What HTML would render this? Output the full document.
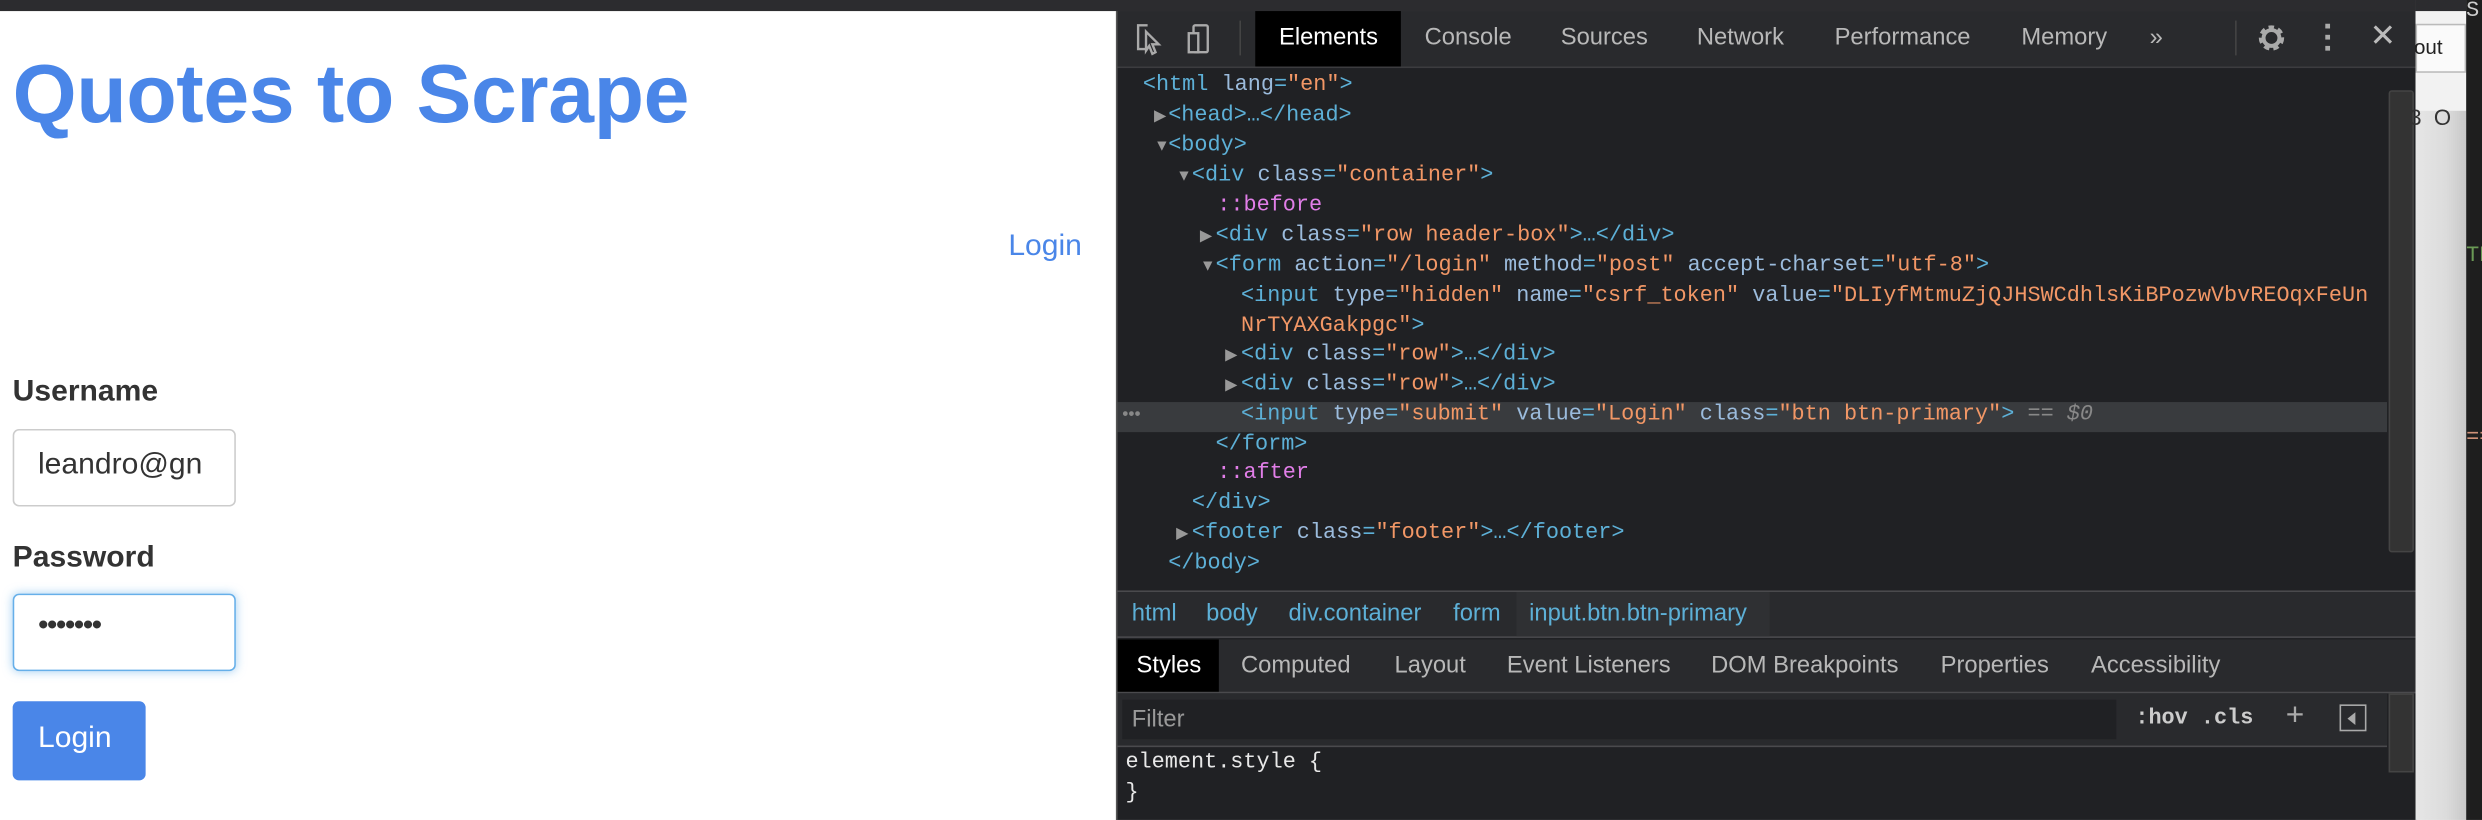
<!DOCTYPE html>
<html><head><meta charset="utf-8"><style>
html,body{margin:0;padding:0;width:2482px;height:820px;overflow:hidden;background:#fff}
#w{position:absolute;left:0;top:0;width:1568px;height:518px;transform:scale(1.58291);transform-origin:0 0;font-family:"Liberation Sans",sans-serif}
.a{position:absolute;white-space:pre}
.m{font-family:"Liberation Mono",monospace;font-size:13.8px;color:#5db0d7}
.l{position:absolute;white-space:pre;font-family:"Liberation Mono",monospace;font-size:13.8px;color:#5db0d7;line-height:18px}
.ar{position:absolute;font-size:10px;color:#999;line-height:17px}
.t{color:#9bbbdc}.v{color:#f29766}.p{color:#e17ee8}.g{color:#888}
.tab{position:absolute;top:7px;height:35px;line-height:33px;font-size:15px;color:#b8b8b8}
.st{position:absolute;top:404px;height:33px;line-height:33px;font-size:15px;color:#b8b8b8}
</style></head><body><div id="w">
<div class="a" style="left:0;top:0;width:1568px;height:7px;background:#2c2c2f"></div>
<div class="a" style="left:8px;top:30px;font-size:52px;font-weight:bold;color:#4a86e8;letter-spacing:-0.2px">Quotes to Scrape</div>
<div class="a" style="left:637px;top:145px;font-size:19px;color:#4a86e8">Login</div>
<div class="a" style="left:8px;top:237px;font-size:19px;font-weight:bold;color:#333">Username</div>
<div class="a" style="left:8px;top:271px;width:141px;height:49px;border:1px solid #ccc;border-radius:4px;box-sizing:border-box"></div>
<div class="a" style="left:24px;top:283px;font-size:19px;color:#333">leandro@gn</div>
<div class="a" style="left:8px;top:342px;font-size:19px;font-weight:bold;color:#333">Password</div>
<div class="a" style="left:8px;top:375px;width:141px;height:49px;border:1px solid #66afe9;border-radius:4px;box-sizing:border-box;box-shadow:0 0 6px rgba(102,175,233,.6)"></div>
<div class="a" style="left:24px;top:385px;font-size:19px;color:#333;letter-spacing:-1px">•••••••</div>
<div class="a" style="left:8px;top:443px;width:84px;height:50px;background:#4a86e8;border-radius:4px"></div>
<div class="a" style="left:24px;top:456px;font-size:19px;color:#fff">Login</div>

<div class="a" style="left:705px;top:7px;width:821px;height:511px;background:#202124;border-left:1px solid #555"></div>
<div class="a" style="left:706px;top:7px;width:820px;height:35px;background:#292a2d;border-bottom:1px solid #3c3c3f"></div>
<svg class="a" style="left:716px;top:13px" width="60" height="24" viewBox="0 0 60 24"><path d="M9 3H3v15h5M8 7l8 8-4 0 2 5-2 1-2-5-2 3z" fill="none" stroke="#aaa" stroke-width="1.5"/><rect x="38" y="3" width="9" height="17" rx="1" fill="none" stroke="#aaa" stroke-width="1.5"/><rect x="35" y="8" width="6" height="12" fill="#292a2d" stroke="#aaa" stroke-width="1.5"/></svg>
<div class="a" style="left:783px;top:13px;width:1px;height:22px;background:#444"></div>
<div class="a" style="left:793px;top:7px;width:92px;height:35px;background:#000"></div>
<div class="tab" style="left:808px;color:#fff">Elements</div>
<div class="tab" style="left:900px">Console</div>
<div class="tab" style="left:986px">Sources</div>
<div class="tab" style="left:1072px">Network</div>
<div class="tab" style="left:1159px">Performance</div>
<div class="tab" style="left:1277px">Memory</div>
<div class="tab" style="left:1358px">»</div>
<div class="a" style="left:1412px;top:13px;width:1px;height:22px;background:#444"></div>
<svg class="a" style="left:1425px;top:14px" width="20" height="20" viewBox="0 0 20 20"><circle cx="10" cy="10" r="6" fill="none" stroke="#aaa" stroke-width="4" stroke-dasharray="3 2.3"/><circle cx="10" cy="10" r="5" fill="none" stroke="#aaa" stroke-width="2.5"/></svg>
<div class="a" style="left:1469px;top:15px;width:3px;height:3px;background:#aaa;box-shadow:0 7px #aaa,0 14px #aaa"></div>
<div class="tab" style="left:1497px;color:#bbb;font-size:20px">✕</div>

<div class="a" style="left:706px;top:254px;width:802px;height:19px;background:#393b3e"></div>
<div class="a g" style="left:709px;top:256px;font-size:11px">•••</div>
<div class="a" style="left:1509px;top:57px;width:16px;height:292px;background:#333;border:1px solid #444;border-radius:2px;box-sizing:border-box"></div>

<div class="l" style="left:722px;top:46px">&lt;html <span class="t">lang</span>=<span class="v">"en"</span>&gt;</div>
<div class="ar" style="left:729px;top:65px">▶</div><div class="l" style="left:738px;top:65px">&lt;head&gt;…&lt;/head&gt;</div>
<div class="ar" style="left:729px;top:84px">▼</div><div class="l" style="left:738px;top:84px">&lt;body&gt;</div>
<div class="ar" style="left:743px;top:103px">▼</div><div class="l" style="left:753px;top:103px">&lt;div <span class="t">class</span>=<span class="v">"container"</span>&gt;</div>
<div class="l p" style="left:769px;top:122px">::before</div>
<div class="ar" style="left:758px;top:141px">▶</div><div class="l" style="left:768px;top:141px">&lt;div <span class="t">class</span>=<span class="v">"row header-box"</span>&gt;…&lt;/div&gt;</div>
<div class="ar" style="left:758px;top:160px">▼</div><div class="l" style="left:768px;top:160px">&lt;form <span class="t">action</span>=<span class="v">"/login"</span> <span class="t">method</span>=<span class="v">"post"</span> <span class="t">accept-charset</span>=<span class="v">"utf-8"</span>&gt;</div>
<div class="l" style="left:784px;top:179px">&lt;input <span class="t">type</span>=<span class="v">"hidden"</span> <span class="t">name</span>=<span class="v">"csrf_token"</span> <span class="t">value</span>=<span class="v">"DLIyfMtmuZjQJHSWCdhlsKiBPozwVbvREOqxFeUn</span></div>
<div class="l" style="left:784px;top:198px"><span class="v">NrTYAXGakpgc"</span>&gt;</div>
<div class="ar" style="left:774px;top:216px">▶</div><div class="l" style="left:784px;top:216px">&lt;div <span class="t">class</span>=<span class="v">"row"</span>&gt;…&lt;/div&gt;</div>
<div class="ar" style="left:774px;top:235px">▶</div><div class="l" style="left:784px;top:235px">&lt;div <span class="t">class</span>=<span class="v">"row"</span>&gt;…&lt;/div&gt;</div>
<div class="l" style="left:784px;top:254px">&lt;input <span class="t">type</span>=<span class="v">"submit"</span> <span class="t">value</span>=<span class="v">"Login"</span> <span class="t">class</span>=<span class="v">"btn btn-primary"</span>&gt; <span class="g">== <i>$0</i></span></div>
<div class="l" style="left:768px;top:273px">&lt;/form&gt;</div>
<div class="l p" style="left:769px;top:291px">::after</div>
<div class="l" style="left:753px;top:310px">&lt;/div&gt;</div>
<div class="ar" style="left:743px;top:329px">▶</div><div class="l" style="left:753px;top:329px">&lt;footer <span class="t">class</span>=<span class="v">"footer"</span>&gt;…&lt;/footer&gt;</div>
<div class="l" style="left:738px;top:348px">&lt;/body&gt;</div>

<div class="a" style="left:706px;top:373px;width:820px;height:30px;background:#292a2d;border-top:1px solid #4a4a4d;border-bottom:1px solid #4a4a4d;box-sizing:border-box"></div>
<div class="a" style="left:958px;top:374px;width:160px;height:28px;background:#2f3033"></div>
<div class="a" style="left:715px;top:379px;font-size:15px;color:#5db0d7">html</div>
<div class="a" style="left:762px;top:379px;font-size:15px;color:#5db0d7">body</div>
<div class="a" style="left:814px;top:379px;font-size:15px;color:#5db0d7">div.container</div>
<div class="a" style="left:918px;top:379px;font-size:15px;color:#5db0d7">form</div>
<div class="a" style="left:966px;top:379px;font-size:15px;color:#5db0d7">input.btn.btn-primary</div>
<div class="a" style="left:706px;top:404px;width:820px;height:33px;background:#292a2d;border-bottom:1px solid #4a4a4d"></div>
<div class="a" style="left:706px;top:404px;width:64px;height:33px;background:#000"></div>
<div class="st" style="left:718px;color:#fff">Styles</div>
<div class="st" style="left:784px">Computed</div>
<div class="st" style="left:881px">Layout</div>
<div class="st" style="left:952px">Event Listeners</div>
<div class="st" style="left:1081px">DOM Breakpoints</div>
<div class="st" style="left:1226px">Properties</div>
<div class="st" style="left:1321px">Accessibility</div>
<div class="a" style="left:706px;top:438px;width:802px;height:33px;background:#292a2d;border-bottom:1px solid #4a4a4d"></div>
<div class="a" style="left:709px;top:442px;width:628px;height:25px;background:#202124"></div>
<div class="a" style="left:715px;top:446px;font-size:15px;color:#999">Filter</div>
<div class="a m" style="left:1349px;top:447px;color:#ccc;font-weight:bold">:hov .cls</div>
<div class="a" style="left:1444px;top:441px;font-size:20px;color:#aaa">+</div>
<div class="a" style="left:1478px;top:445px;width:17px;height:17px;border:1px solid #aaa;box-sizing:border-box"></div>
<div class="a" style="left:1483px;top:450px;width:0;height:0;border-top:4px solid transparent;border-bottom:4px solid transparent;border-right:5px solid #aaa"></div>
<div class="a m" style="left:711px;top:473px;line-height:19px;color:#e8e8e8">element.style {
}</div>
<div class="a" style="left:1509px;top:438px;width:16px;height:50px;background:#333;border:1px solid #444;box-sizing:border-box"></div>

<div class="a" style="left:1526px;top:0;width:32px;height:518px;background:linear-gradient(90deg,#e6e6e6,#dcdcdc 60%,#c8c8c8)"></div>
<div class="a" style="left:1526px;top:0;width:32px;height:70px;background:#f2f2f2"></div>
<div class="a" style="left:1526px;top:15px;width:32px;height:31px;background:#fafafa;border:1px solid #bbb;box-sizing:border-box"></div>
<div class="a" style="left:1525px;top:22px;font-size:13px;color:#222">out</div>
<div class="a" style="left:1522px;top:66px;font-size:14px;color:#333">3&nbsp; O</div>
<div class="a" style="left:1526px;top:0;width:32px;height:7px;background:#2c2c2f"></div>
<div class="a" style="left:1558px;top:0;width:10px;height:518px;background:#1e1e1e"></div>
<div class="a m" style="left:1558px;top:0;color:#ccc">S</div>
<div class="a m" style="left:1558px;top:155px;color:#6a9955">TH</div>
<div class="a m" style="left:1558px;top:270px;color:#ce9178">==</div>
</div></body></html>
